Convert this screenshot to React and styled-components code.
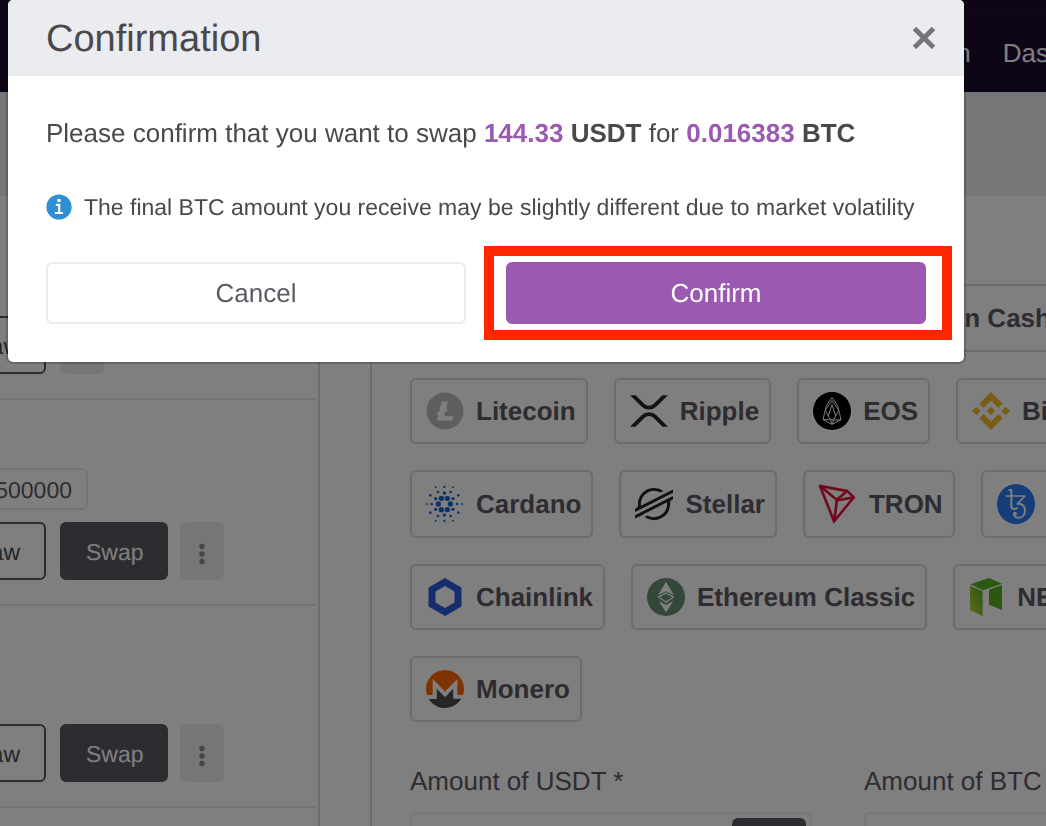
import React, { useState } from "react";
import styled, { createGlobalStyle } from "styled-components";

const GlobalStyle = createGlobalStyle`
  * {
    box-sizing: border-box;
  }

  body {
    margin: 0;
    background: #fff;
    color: #5e5862;
    font-family: "Liberation Sans", Arial, Helvetica, sans-serif;
    font-size: 26px;
    text-rendering: geometricPrecision;
  }

  button, input {
    font-family: inherit;
    text-rendering: inherit;
  }

  button {
    cursor: pointer;
  }
`;

const Page = styled.div`
  height: 100vh;
  overflow: hidden;
`;

const TopBar = styled.header`
  height: 92px;
  background: #1c0a2e;
  display: flex;
  flex-direction: column;
`;

const TopStrip = styled.div`
  height: 16px;
  border-bottom: 1px solid #261538;
`;

const Nav = styled.nav`
  flex: 1;
  display: flex;
  align-items: center;
  justify-content: flex-end;
  gap: 32px;
  margin-right: -84px;
  padding-bottom: 2px;
`;

const NavLink = styled.a`
  color: #fff;
  font-size: 26px;
  text-decoration: none;
`;

const Banner = styled.div`
  height: 104px;
  background: #ebecf0;
`;

const Columns = styled.main`
  display: grid;
  grid-template-columns: 426px minmax(0, 1fr);
  gap: 50px;
  margin-left: -106px;
`;

const Wallets = styled.section`
  border-right: 2px solid #d8d8d8;
  padding: 2px 2px 60px 0;
`;

const WalletRow = styled.div`
  display: flex;
  flex-direction: column;
  justify-content: flex-end;
  gap: 12px;
  min-height: 202px;
  padding: 68px 0 24px;
  border-bottom: 2px solid #e8e8e8;
`;

const Balance = styled.div`
  width: 194px;
  height: 42px;
  padding: 0 14px;
  border: 2px solid #ebebeb;
  border-radius: 6px;
  font-size: 23px;
  line-height: 40px;
  text-align: right;
`;

const Actions = styled.div`
  display: flex;
  gap: 12px;
`;

const ActionButton = styled.button`
  height: 58px;
  width: ${({ $outline }) => ($outline ? "152px" : "108px")};
  margin-right: ${({ $outline }) => ($outline ? "2px" : "0")};
  padding: 2px 24px 0;
  border: 2px solid #5e5862;
  border-radius: 6px;
  background: ${({ $outline }) => ($outline ? "#fff" : "#5e5862")};
  color: ${({ $outline }) => ($outline ? "#4a4a4a" : "#fff")};
  font-size: 23px;
  text-align: right;
`;

const MoreButton = styled.button`
  width: 44px;
  height: 58px;
  padding: 8px 0 0;
  border: 0;
  border-radius: 6px;
  background: #ebecf0;
  color: #8a8a8e;
`;

const SwapPanel = styled.section`
  border-left: 2px solid #d8d8d8;
  padding: 88px 0 0 38px;
  min-width: 0;
`;

const CoinRows = styled.div`
  display: flex;
  flex-direction: column;
  gap: 26px;
`;

const CoinRow = styled.div`
  display: flex;
  gap: 26px;
`;

const CoinButton = styled.button`
  flex: none;
  display: flex;
  align-items: center;
  gap: 12px;
  min-height: 66px;
  padding: 12px 10px 12px 14px;
  border: 2px solid #d8d8d8;
  border-radius: 6px;
  background: #fff;
  color: #5e5862;
  font-size: 26px;
  font-weight: bold;
`;

const Amounts = styled.div`
  display: grid;
  grid-template-columns: 1fr 1fr;
  gap: 52px;
  min-width: 856px;
  margin-top: 42px;
`;

const Field = styled.div`
  display: flex;
  flex-direction: column;
  gap: 14px;
  min-width: 0;
`;

const Label = styled.label`
  line-height: 34px;
`;

const InputBox = styled.div`
  display: flex;
  height: 64px;
  padding: 4px;
  border: 2px solid #eee;
  border-radius: 6px;
`;

const AmountInput = styled.input`
  flex: 1;
  min-width: 0;
  border: 0;
  outline: 0;
  background: transparent;
  font-size: 26px;
`;

const MaxButton = styled.button`
  width: 74px;
  border: 0;
  border-radius: 6px;
  background: #5e5862;
  color: #fff;
  font-size: 23px;
`;

const Backdrop = styled.div`
  position: fixed;
  inset: 0;
  padding: 0 82px 0 8px;
  background: rgba(0, 0, 0, 0.5);
`;

const Dialog = styled.div`
  border-radius: 5px;
  background: #fff;
  box-shadow: 0 0 0 2px rgba(0, 0, 0, 0.2);
  overflow: hidden;
`;

const DialogHeader = styled.div`
  display: flex;
  align-items: center;
  justify-content: space-between;
  height: 76px;
  padding: 0 28px 0 38px;
  background: #ebecf0;
`;

const Title = styled.h2`
  margin: 0;
  padding-top: 3px;
  color: #4a484b;
  font-size: 38px;
  font-weight: normal;
`;

const CloseButton = styled.button`
  display: flex;
  padding: 0;
  border: 0;
  background: none;
  color: #757577;
`;

const DialogBody = styled.div`
  display: flex;
  flex-direction: column;
  gap: 36px;
  padding: 38px;
  color: #4a484b;
`;

const Question = styled.p`
  margin: 0;
  line-height: 38px;
`;

const Amount = styled.span`
  color: #9b59b1;
`;

const Notice = styled.div`
  display: flex;
  align-items: center;
  gap: 12px;
  height: 38px;
  font-size: 23px;
`;

const DialogButtons = styled.div`
  display: grid;
  grid-template-columns: 1fr 1fr;
  gap: 40px;
`;

const DialogButton = styled.button`
  width: 100%;
  height: 62px;
  border: 2px solid ${({ $primary }) => ($primary ? "#9b59b1" : "#ebebf0")};
  border-radius: 6px;
  background: ${({ $primary }) => ($primary ? "#9b59b1" : "#fff")};
  color: ${({ $primary }) => ($primary ? "#fff" : "#5e5862")};
  font-size: 26px;
`;

const Highlight = styled.div`
  position: relative;

  &::after {
    content: "";
    position: absolute;
    inset: -16px -26px -16px -22px;
    border: 10px solid #ff2600;
    pointer-events: none;
  }
`;

const LitecoinIcon = () => (
  <svg width="38" height="38" viewBox="0 0 32 32">
    <circle cx="16" cy="16" r="15.6" fill="#bdbdbd" />
    <path
      fill="#fff"
      d="M10.427 19.214L9 19.768l.688-2.759 1.444-.58L13.213 8h5.129l-1.519 6.196 1.41-.571-.68 2.75-1.427.571-.848 3.483H23L22.127 24H9.252z"
    />
  </svg>
);

const RippleIcon = () => (
  <svg width="38" height="38" viewBox="6 6.3 20 20">
    <path
      fill="#23292f"
      d="M23.07 8h2.89l-6.015 5.957a5.621 5.621 0 01-7.89 0L6.035 8H8.93l4.57 4.523a3.556 3.556 0 004.996 0L23.07 8zM8.895 24.563H6l6.055-5.993a5.621 5.621 0 017.89 0L26 24.563h-2.895L18.5 20a3.556 3.556 0 00-4.996 0l-4.61 4.563z"
    />
  </svg>
);

const EosIcon = () => (
  <svg width="38" height="38" viewBox="0 0 114 114">
    <circle cx="57" cy="57" r="57" fill="#000" />
    <g fill="none" stroke="#fff" strokeWidth="3" strokeLinejoin="round">
      <path d="M57 17L40 41L30 83L57 97L84 83L74 41Z" />
      <path d="M57 26L37 54L52 84H62L77 54Z" />
      <path d="M30 83H52L57 97L62 84H84M57 38L46 72M57 38L68 72" />
    </g>
  </svg>
);

const BinanceIcon = () => (
  <svg width="38" height="38" viewBox="0 0 24 24">
    <path
      fill="#f3ba2f"
      d="M16.624 13.9202l2.7175 2.7154-7.353 7.353-7.353-7.352 2.7175-2.7164 4.6355 4.6595 4.6356-4.6595zm4.6366-4.6366L24 12l-2.7154 2.7164L18.5682 12l2.6924-2.7164zm-9.272.001l2.7163 2.6914-2.7164 2.7174v-.001L9.2721 12l2.7164-2.7154zm-9.2722-.001L5.4088 12l-2.6914 2.6924L0 12l2.7164-2.7164zM11.9885.0115l7.353 7.329-2.7174 2.7154-4.6356-4.6356-4.6355 4.6595-2.7174-2.7154 7.353-7.353z"
    />
  </svg>
);

// [x, y, radius] measured from the centre of the mark
const cardanoDots = [
  [18, 0, 8], [-18, 0, 8], [9, -17, 8], [-9, -17, 8], [9, 17, 8], [-9, 17, 8],
  [0, -33, 5], [0, 33, 5], [26, -16, 5], [-26, -16, 5], [26, 16, 5], [-26, 16, 5],
  [19, -36, 4], [-19, -36, 4], [19, 36, 4], [-19, 36, 4], [38, 0, 4], [-38, 0, 4],
  [0, -51, 3.5], [0, 51, 3.5], [42, -26, 4], [-42, -26, 4], [42, 26, 4], [-42, 26, 4],
  [26, -50, 3], [-26, -50, 3], [26, 50, 3], [-26, 50, 3], [53, 0, 3], [-53, 0, 3],
];

const CardanoIcon = () => (
  <svg width="38" height="38" viewBox="-55 -57 114 114">
    {cardanoDots.map(([x, y, r]) => (
      <circle key={`${x},${y}`} cx={x} cy={y} r={r} fill="#1564d2" />
    ))}
  </svg>
);

const StellarIcon = () => (
  <svg width="38" height="38" viewBox="0 0 24 24">
    <path
      fill="#222"
      d="M12.283 1.851A10.154 10.154 0 001.846 12.002c0 .259.01.516.03.773A1.847 1.847 0 01.872 14.56L0 15.005v2.074l2.568-1.309.832-.424.82-.417 14.71-7.496 1.653-.842L24 4.85V2.776l-3.387 1.728-2.89 1.473-13.955 7.108a8.376 8.376 0 01-.07-1.086 8.313 8.313 0 0112.366-7.247l1.654-.843.247-.126a10.154 10.154 0 00-5.682-1.932zM24 6.925L5.055 16.571l-1.653.844L0 19.15v2.072L3.378 19.5l2.89-1.473 13.97-7.117a8.474 8.474 0 01.07 1.092A8.313 8.313 0 017.93 19.248l-.101.054-1.793.914a10.154 10.154 0 0016.119-8.214c0-.26-.01-.522-.03-.78a1.848 1.848 0 011.003-1.785L24 8.992z"
    />
  </svg>
);

const TronIcon = () => (
  <svg width="38" height="40" viewBox="7.8 7 18.8 19.6">
    <path
      fill="#e50a34"
      stroke="#e50a34"
      strokeWidth="0.3"
      d="M21.932 9.913L7.5 7.257l7.595 19.112 10.583-12.894-3.746-3.562zm-.232 1.17l2.208 2.099-6.038 1.093 3.83-3.192zm-5.142 2.973l-6.364-5.278 10.402 1.914-4.038 3.364zm-.453.934l-1.038 8.58L9.472 9.487l6.633 5.502zm.96.455l6.687-1.21-7.67 9.343.983-8.133z"
    />
  </svg>
);

const TezosIcon = () => (
  <svg width="38" height="40" viewBox="0 0 114 120">
    <ellipse cx="57" cy="60" rx="57" ry="60" fill="#2c7df7" />
    <g fill="none" stroke="#fff" strokeLinecap="round" strokeLinejoin="round">
      <path strokeWidth="6" d="M37 18H43V66C43 77 53 78 60 72" />
      <path strokeWidth="5" d="M28 36H84L62 59" />
      <path strokeWidth="6" d="M62 59C78 58 84 69 84 80C84 94 75 101 65 101C56 101 50 95 51 89" />
    </g>
    <circle cx="54" cy="89" r="6" fill="#fff" />
  </svg>
);

const ChainlinkIcon = () => (
  <svg width="38" height="38" viewBox="0 0 24 24">
    <path
      fill="#2a5ada"
      d="M12 0L9.798 1.266l-6 3.468L1.596 6v12l2.202 1.266 6.055 3.468L12.055 24l2.202-1.266 5.945-3.468L22.404 18V6l-2.202-1.266-6-3.468zM6 15.468V8.532l6-3.468 6 3.468v6.936l-6 3.468z"
    />
  </svg>
);

const EthereumClassicIcon = () => (
  <svg width="38" height="38" viewBox="0 0 114 114">
    <circle cx="57" cy="57" r="57" fill="#669073" />
    <path fill="#fff" d="M57 11L81 52L57 40L33 52ZM35 69L57 81L79 69L57 103Z" />
    <path fill="#fff" d="M57 43L83 57L57 75L31 57ZM57 47L38 58L57 70L76 58Z" fillRule="evenodd" />
  </svg>
);

const NeoIcon = () => (
  <svg width="36" height="38" viewBox="6 0 108 114">
    <defs>
      <linearGradient id="neo-side" x1="0" y1="1" x2="1" y2="0">
        <stop offset="0" stopColor="#c8d838" />
        <stop offset="1" stopColor="#4fa824" />
      </linearGradient>
      <linearGradient id="neo-top" x1="0" y1="1" x2="1" y2="0">
        <stop offset="0" stopColor="#62b428" />
        <stop offset="1" stopColor="#4cb416" />
      </linearGradient>
    </defs>
    <path fill="url(#neo-top)" d="M9 19L66 0L105 17L48 37Z" />
    <path fill="url(#neo-side)" d="M9 23L47 40V114L9 97Z" />
    <path fill="#54b01e" d="M66 35L105 21V96L66 80Z" />
  </svg>
);

const MoneroIcon = () => (
  <svg width="38" height="38" viewBox="0 0 24 24">
    <path
      fill="#ff6600"
      d="M12 0C5.365 0 0 5.373 0 12.015c0 1.335.228 2.607.618 3.81h3.577V5.729L12 13.545l7.805-7.815v10.095h3.577c.389-1.203.618-2.475.618-3.81C24 5.375 18.635 0 12 0z"
    />
    <path
      fill="#4c4c4c"
      d="M10.212 15.307l-3.417-3.421v6.351H1.758C3.87 21.689 7.678 24 12 24s8.162-2.311 10.245-5.764h-5.04v-6.351l-3.386 3.421-1.788 1.79-1.814-1.79z"
    />
  </svg>
);

const DiscIcon = () => (
  <svg width="38" height="40" viewBox="0 0 38 40">
    <circle cx="19" cy="20" r="19" fill="#f7931a" />
  </svg>
);

const InfoIcon = () => (
  <svg width="26" height="26" viewBox="0 0 26 26" aria-hidden="true">
    <circle cx="13" cy="13" r="12.6" fill="#2e8fd6" />
    <circle cx="13" cy="6.5" r="1.8" fill="#fff" />
    <path d="M9.8 10.8H13.2V19M9 19H17" fill="none" stroke="#fff" strokeWidth="2.2" />
  </svg>
);

const CloseIcon = () => (
  <svg width="24" height="24" viewBox="0 0 24 24">
    <path d="M3 4L21 22M21 4L3 22" stroke="#fff" strokeWidth="5" />
    <path d="M2.5 2.5L21.5 21.5M21.5 2.5L2.5 21.5" stroke="currentColor" strokeWidth="5" />
  </svg>
);

const DotsIcon = () => (
  <svg width="6" height="22" viewBox="0 0 6 22" fill="currentColor">
    <circle cx="3" cy="3.5" r="2.7" />
    <circle cx="3" cy="11" r="2.7" />
    <circle cx="3" cy="18.5" r="2.7" />
  </svg>
);

const coinRows = [
  [
    { name: "Bitcoin", Icon: DiscIcon },
    { name: "Ethereum", Icon: DiscIcon },
    { name: "Bitcoin Cash", Icon: DiscIcon },
  ],
  [
    { name: "Litecoin", Icon: LitecoinIcon },
    { name: "Ripple", Icon: RippleIcon },
    { name: "EOS", Icon: EosIcon },
    { name: "Binance Coin", Icon: BinanceIcon },
  ],
  [
    { name: "Cardano", Icon: CardanoIcon },
    { name: "Stellar", Icon: StellarIcon },
    { name: "TRON", Icon: TronIcon },
    { name: "Tezos", Icon: TezosIcon },
  ],
  [
    { name: "Chainlink", Icon: ChainlinkIcon },
    { name: "Ethereum Classic", Icon: EthereumClassicIcon },
    { name: "NEO", Icon: NeoIcon },
  ],
  [{ name: "Monero", Icon: MoneroIcon }],
];

const wallets = [
  { id: 1, swap: false },
  { id: 2, swap: true, balance: "0.500000" },
  { id: 3, swap: true },
];

const App = () => {
  const [open, setOpen] = useState(true);
  const close = () => setOpen(false);

  return (
    <Page>
      <GlobalStyle />
      <TopBar>
        <TopStrip />
        <Nav>
          <NavLink href="#earn">Earn</NavLink>
          <NavLink href="#dashboard">Dashboard</NavLink>
        </Nav>
      </TopBar>
      <Banner />
      <Columns>
        <Wallets>
          {wallets.map(({ id, swap, balance }) => (
            <WalletRow key={id}>
              {balance && <Balance>{balance}</Balance>}
              <Actions>
                <ActionButton type="button" $outline>
                  Withdraw
                </ActionButton>
                {swap && <ActionButton type="button">Swap</ActionButton>}
                <MoreButton type="button" aria-label="More">
                  <DotsIcon />
                </MoreButton>
              </Actions>
            </WalletRow>
          ))}
        </Wallets>
        <SwapPanel>
          <CoinRows>
            {coinRows.map((row) => (
              <CoinRow key={row[0].name}>
                {row.map(({ name, Icon }) => (
                  <CoinButton type="button" key={name}>
                    <Icon />
                    {name}
                  </CoinButton>
                ))}
              </CoinRow>
            ))}
          </CoinRows>
          <Amounts>
            <Field>
              <Label htmlFor="from">Amount of USDT *</Label>
              <InputBox>
                <AmountInput id="from" type="text" />
                <MaxButton type="button">Max</MaxButton>
              </InputBox>
            </Field>
            <Field>
              <Label htmlFor="to">Amount of BTC</Label>
              <InputBox>
                <AmountInput id="to" type="text" />
              </InputBox>
            </Field>
          </Amounts>
        </SwapPanel>
      </Columns>

      {open && (
        <Backdrop>
          <Dialog role="dialog" aria-modal="true" aria-labelledby="dialog-title">
            <DialogHeader>
              <Title id="dialog-title">Confirmation</Title>
              <CloseButton type="button" aria-label="Close" onClick={close}>
                <CloseIcon />
              </CloseButton>
            </DialogHeader>
            <DialogBody>
              <Question>
                Please confirm that you want to swap{" "}
                <b>
                  <Amount>144.33</Amount> USDT
                </b>{" "}
                for{" "}
                <b>
                  <Amount>0.016383</Amount> BTC
                </b>
              </Question>
              <Notice>
                <InfoIcon />
                The final BTC amount you receive may be slightly different due to market volatility
              </Notice>
              <DialogButtons>
                <DialogButton type="button" onClick={close}>
                  Cancel
                </DialogButton>
                <Highlight>
                  <DialogButton type="button" $primary onClick={close}>
                    Confirm
                  </DialogButton>
                </Highlight>
              </DialogButtons>
            </DialogBody>
          </Dialog>
        </Backdrop>
      )}
    </Page>
  );
};

export default App;
